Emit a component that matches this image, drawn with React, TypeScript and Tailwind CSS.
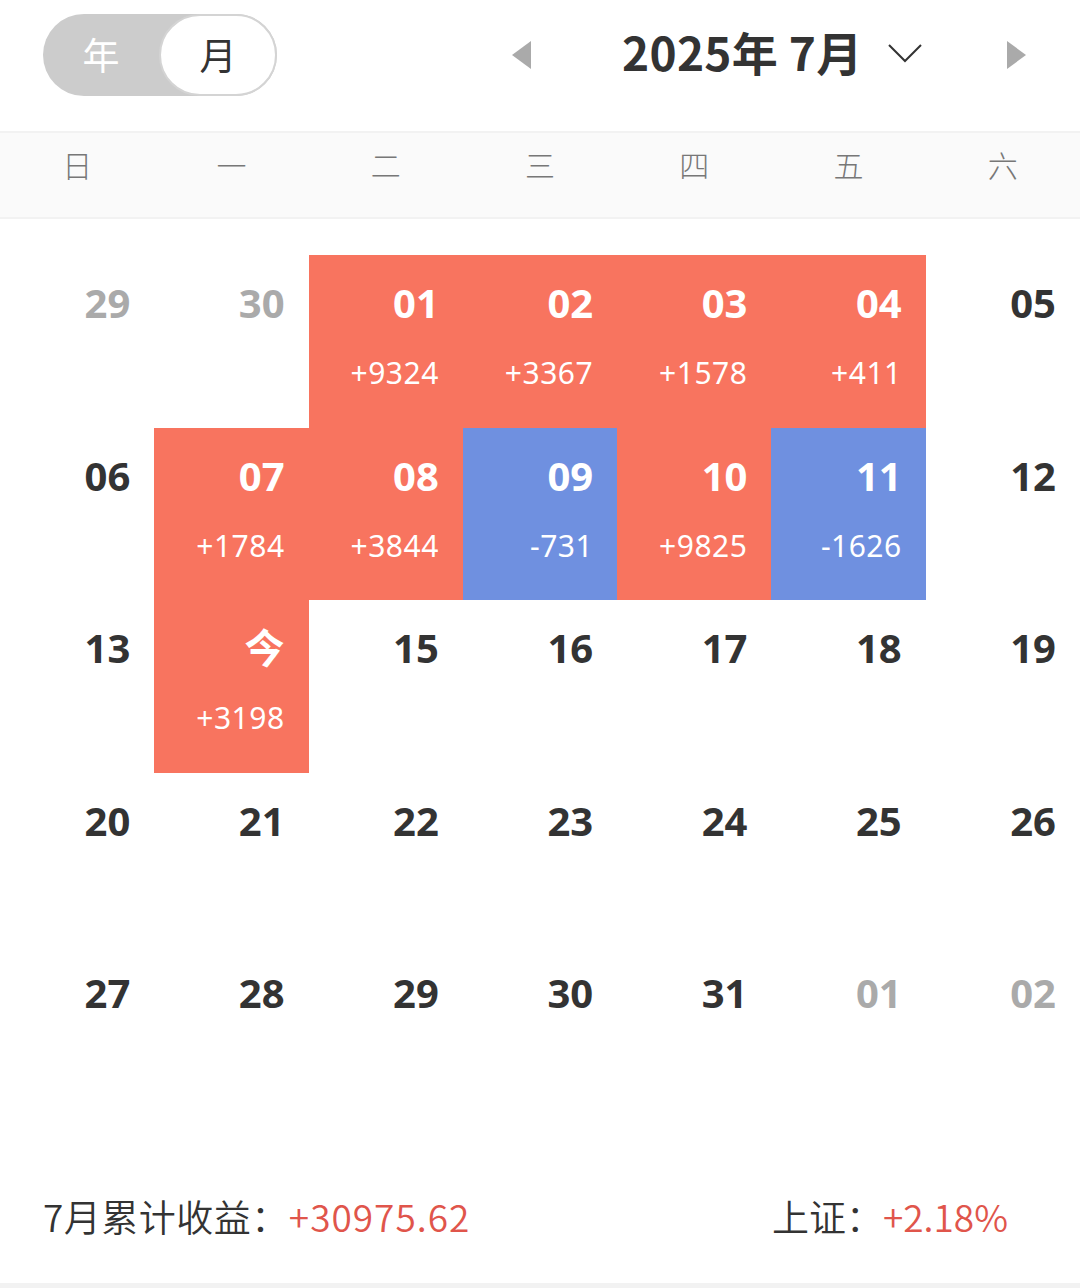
import React from "react";

type Cell = {
  day: string;
  value?: string;
  kind?: "up" | "down";
  muted?: boolean;
};

const weekDays = ["日", "一", "二", "三", "四", "五", "六"];

const weeks: Cell[][] = [
  [
    { day: "29", muted: true },
    { day: "30", muted: true },
    { day: "01", value: "+9324", kind: "up" },
    { day: "02", value: "+3367", kind: "up" },
    { day: "03", value: "+1578", kind: "up" },
    { day: "04", value: "+411", kind: "up" },
    { day: "05" },
  ],
  [
    { day: "06" },
    { day: "07", value: "+1784", kind: "up" },
    { day: "08", value: "+3844", kind: "up" },
    { day: "09", value: "-731", kind: "down" },
    { day: "10", value: "+9825", kind: "up" },
    { day: "11", value: "-1626", kind: "down" },
    { day: "12" },
  ],
  [
    { day: "13" },
    { day: "今", value: "+3198", kind: "up" },
    { day: "15" },
    { day: "16" },
    { day: "17" },
    { day: "18" },
    { day: "19" },
  ],
  [
    { day: "20" },
    { day: "21" },
    { day: "22" },
    { day: "23" },
    { day: "24" },
    { day: "25" },
    { day: "26" },
  ],
  [
    { day: "27" },
    { day: "28" },
    { day: "29" },
    { day: "30" },
    { day: "31" },
    { day: "01", muted: true },
    { day: "02", muted: true },
  ],
];

const font = { fontFamily: '"Noto Sans", "Noto Sans CJK SC", sans-serif' };
const cjk = { fontFamily: '"Noto Sans CJK SC", sans-serif' };

const DayCell = ({ cell }: { cell: Cell }) => {
  const bg =
    cell.kind === "up" ? "bg-[#f8745f]" : cell.kind === "down" ? "bg-[#6f90e0]" : "bg-white";
  const numColor = cell.kind ? "text-white" : cell.muted ? "text-[#aaaaaa]" : "text-[#333333]";
  return (
    <div className={`h-[172.5px] flex flex-col items-end pr-[24px] ${bg}`}>
      <div className={`mt-[27px] text-[40px] leading-[42px] font-bold ${numColor}`}>{cell.day}</div>
      {cell.value && (
        <div className="mt-[32px] text-[30px] leading-[34px] text-white tracking-[0.5px]">{cell.value}</div>
      )}
    </div>
  );
};

export default function App() {
  return (
    <div className="w-[1080px] h-[1288px] bg-white flex flex-col" style={font}>
      <div className="h-[131px] flex items-center pl-[43px] pb-[22px]">
        <div className="w-[234px] h-[82px] rounded-full bg-[#cccccc] flex items-center">
          <div className="flex-1 text-center text-[37px] text-white" style={cjk}>
            年
          </div>
          <div
            className="w-[118px] h-[82px] rounded-full bg-white border-2 border-[#d4d4d4] flex items-center justify-center text-[37px] text-[#333333]"
            style={cjk}
          >
            月
          </div>
        </div>
        <svg className="ml-[235px]" width="19" height="28" viewBox="0 0 19 28">
          <polygon points="19,0 19,28 0,14" fill="#aaaaaa" />
        </svg>
        <div
          className="ml-[91px] mt-[-8px] text-[46px] font-bold text-[#333333] leading-none tracking-[0.3px]"
          style={cjk}
        >
          2025年 7月
        </div>
        <svg className="ml-[25px] mt-[-4px]" width="34" height="20" viewBox="0 0 34 20">
          <polyline points="1,2 17,18 33,2" fill="none" stroke="#333333" strokeWidth="2" />
        </svg>
        <svg className="ml-[85px]" width="19" height="28" viewBox="0 0 19 28">
          <polygon points="0,0 0,28 19,14" fill="#aaaaaa" />
        </svg>
      </div>

      <div className="h-[88px] bg-[#fafafa] border-y-2 border-[#f2f2f2] grid grid-cols-7 items-center pb-[22px]">
        {weekDays.map((d) => (
          <div
            key={d}
            className="text-center text-[30px] text-[#777777]"
            style={{ ...cjk, fontWeight: 300 }}
          >
            {d}
          </div>
        ))}
      </div>

      <div className="pt-[36px] grid grid-cols-7">
        {weeks.flat().map((c, i) => (
          <DayCell key={i} cell={c} />
        ))}
      </div>

      <div
        className="flex-1 flex items-start justify-between pl-[43px] pr-[72px] pt-[72px] text-[37px] leading-[52px]"
        style={{ ...cjk, fontWeight: 350 }}
      >
        <div className="text-[#333333] tracking-[0.5px]">
          7月累计收益：<span className="text-[#e0554b] tracking-[1px]">+30975.62</span>
        </div>
        <div className="text-[#333333]">
          上证：<span className="text-[#e0554b]">+2.18%</span>
        </div>
      </div>
      <div className="h-[5px] bg-[#f2f2f2]" />
    </div>
  );
}
